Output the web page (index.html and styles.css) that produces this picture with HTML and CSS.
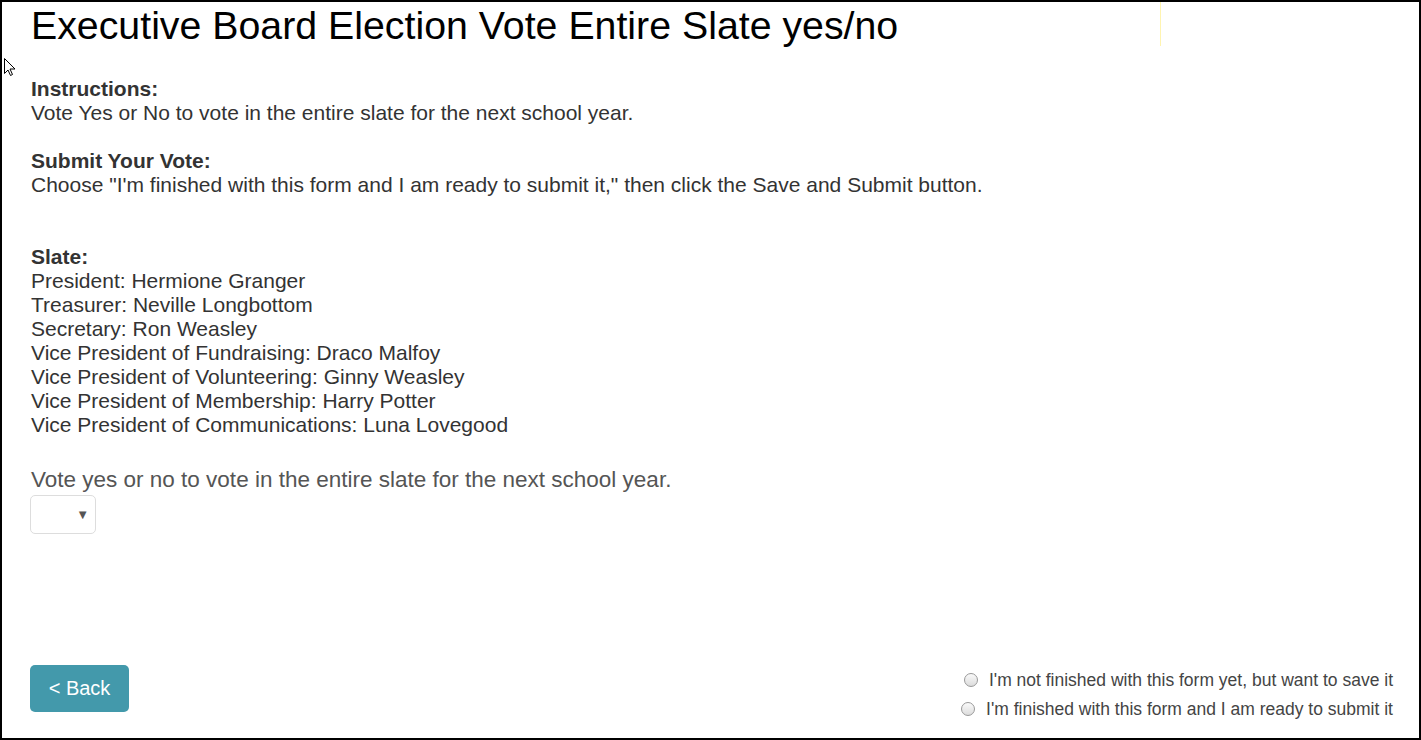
FILE: index.html
```html
<!DOCTYPE html>
<html>
<head>
<meta charset="utf-8">
<link rel="stylesheet" href="styles.css">
</head>
<body>
<div class="frame">
  <span class="guide"></span>
  <svg class="cursor" width="12" height="19" viewBox="0 0 12 19"><path d="M0.5 0.5 L0.5 15.5 L4 12 L6.5 17.5 L8.5 16.5 L6 11 L11 11 Z" fill="#fff" stroke="#000" stroke-width="1"/></svg>
  <main class="content">
    <h1 class="title">Executive Board Election Vote Entire Slate yes/no</h1>
    <section class="block">
      <div class="label">Instructions:</div>
      <div>Vote Yes or No to vote in the entire slate for the next school year.</div>
    </section>
    <section class="block">
      <div class="label">Submit Your Vote:</div>
      <div>Choose "I'm finished with this form and I am ready to submit it," then click the Save and Submit button.</div>
    </section>
    <section class="block slate">
      <div class="label">Slate:</div>
      <div>President: Hermione Granger</div>
      <div>Treasurer: Neville Longbottom</div>
      <div>Secretary: Ron Weasley</div>
      <div>Vice President of Fundraising: Draco Malfoy</div>
      <div>Vice President of Volunteering: Ginny Weasley</div>
      <div>Vice President of Membership: Harry Potter</div>
      <div>Vice President of Communications: Luna Lovegood</div>
    </section>
    <div class="question">Vote yes or no to vote in the entire slate for the next school year.</div>
    <div class="select"><span class="arrow">&#9660;</span></div>
  </main>
  <footer class="footer">
    <button class="back">&lt; Back</button>
    <div class="options">
      <label class="opt"><span class="radio"></span>I'm not finished with this form yet, but want to save it</label>
      <label class="opt"><span class="radio"></span>I'm finished with this form and I am ready to submit it</label>
    </div>
  </footer>
</div>
</body>
</html>
```

FILE: styles.css
```css
html, body {
  margin: 0;
  padding: 0;
  background: #fff;
}
.frame {
  position: relative;
  box-sizing: border-box;
  width: 1421px;
  height: 740px;
  border: 2px solid #000;
  display: flex;
  flex-direction: column;
  font-family: "Liberation Sans", Arial, sans-serif;
  color: #333;
  overflow: hidden;
}
.guide {
  position: absolute;
  left: 1158px;
  top: 0;
  width: 1px;
  height: 44px;
  background: #fff4b0;
}
.cursor {
  position: absolute;
  left: 2px;
  top: 56px;
}
.content {
  padding: 0 0 0 29px;
  font-size: 21px;
  line-height: 24px;
}
.title {
  margin: 0;
  font-size: 39.3px;
  font-weight: normal;
  line-height: 46px;
  color: #000;
}
.block {
  margin-top: 29px;
}
.block + .block {
  margin-top: 24px;
}
.block.slate {
  margin-top: 48px;
}
.label {
  font-weight: bold;
}
.question {
  margin-top: 30px;
  font-size: 22.5px;
  line-height: 26px;
  color: #555;
}
.select {
  box-sizing: border-box;
  width: 66px;
  height: 39px;
  margin-top: 2px;
  margin-left: -1px;
  border: 1px solid #ddd;
  border-radius: 5px;
  display: flex;
  align-items: center;
  justify-content: flex-end;
  padding-right: 6px;
}
.arrow {
  font-size: 13px;
  color: #555;
  line-height: 1;
}
.footer {
  margin-top: auto;
  display: flex;
  justify-content: space-between;
  align-items: flex-start;
  padding: 0 26px 18px 28px;
}
.back {
  width: 99px;
  height: 47px;
  border: none;
  border-radius: 5px;
  background: #4399ab;
  color: #fff;
  font-family: "Liberation Sans", Arial, sans-serif;
  font-size: 20px;
  padding: 0;
}
.options {
  display: flex;
  flex-direction: column;
  align-items: flex-end;
  gap: 7px;
  margin-top: 4px;
  font-size: 17.5px;
  line-height: 22px;
  color: #444;
}
.opt {
  display: flex;
  align-items: center;
}
.radio {
  box-sizing: border-box;
  width: 14px;
  height: 14px;
  border-radius: 50%;
  border: 1px solid #999;
  background: linear-gradient(#fafafa, #dcdcdc);
  margin-right: 11px;
}
```
